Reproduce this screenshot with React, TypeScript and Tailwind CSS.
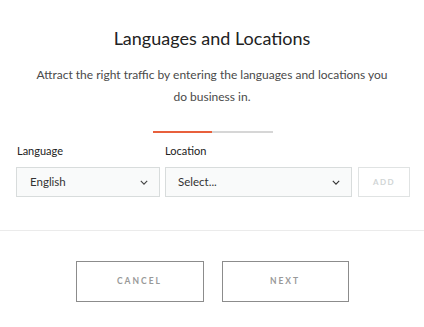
import React, { useState } from 'react';

const Chevron: React.FC<{ className?: string }> = ({ className }) => (
    <svg viewBox="0 0 10 6" className={className} fill="none" stroke="currentColor" strokeWidth="1.4">
        <path d="M1 1l4 4 4-4" />
    </svg>
);

const App: React.FC = () => {
    const [language] = useState('English');

    return (
        <div className="w-[424px] h-[327px] bg-white text-[#2b2b2b] font-['Lato',sans-serif] flex flex-col">
            {/* Heading */}
            <h1 className="pt-[26px] text-[18px] leading-[24px] text-center text-[#222]">Languages and Locations</h1>
            <p className="mt-[14px] mx-auto w-[358px] text-[12px] leading-[22px] text-center text-[#4a4a4a]">
                Attract the right traffic by entering the languages and locations you do business in.
            </p>

            {/* Progress */}
            <div className="mt-[23px] ml-[153px] flex w-[120px] h-[2px]">
                <div className="w-[59px] bg-[#e8603c]" />
                <div className="flex-1 bg-[#d6d6d6]" />
            </div>

            {/* Form */}
            <div className="mt-[10px] pl-[16px] flex items-end">
                <div className="w-[144px] flex flex-col">
                    <label className="pl-[1px] text-[11px] leading-[16px] text-[#222]">Language</label>
                    <div className="mt-[8px] h-[30px] border border-[#d8dcdc] bg-[#f9fafa] flex items-center justify-between pl-[13px] pr-[11px]">
                        <span className="text-[11.5px] text-[#333]">{language}</span>
                        <Chevron className="w-[8px] h-[5px] text-[#444]" />
                    </div>
                </div>
                <div className="ml-[5px] w-[187px] flex flex-col">
                    <label className="text-[11px] leading-[16px] text-[#222]">Location</label>
                    <div className="mt-[8px] h-[30px] border border-[#d8dcdc] bg-[#f9fafa] flex items-center justify-between pl-[12px] pr-[11px]">
                        <span className="text-[11.5px] text-[#333]">Select...</span>
                        <Chevron className="w-[8px] h-[5px] text-[#333]" />
                    </div>
                </div>
                <button className="ml-[6px] w-[52px] h-[30px] border border-[#e0e3e3] bg-white text-[8px] font-bold tracking-[1.5px] text-[#d0d5d5]">
                    ADD
                </button>
            </div>

            <div className="mt-[33px] h-px bg-[#ebebeb]" />

            {/* Actions */}
            <div className="mt-[30px] flex justify-center gap-[18px]">
                <button className="w-[128px] h-[41px] border border-[#8c8c8c] text-[8.5px] font-bold tracking-[2px] text-[#999]">
                    CANCEL
                </button>
                <button className="w-[127px] h-[41px] border border-[#8c8c8c] text-[8.5px] font-bold tracking-[2px] text-[#999]">
                    NEXT
                </button>
            </div>
        </div>
    );
};

export default App;
